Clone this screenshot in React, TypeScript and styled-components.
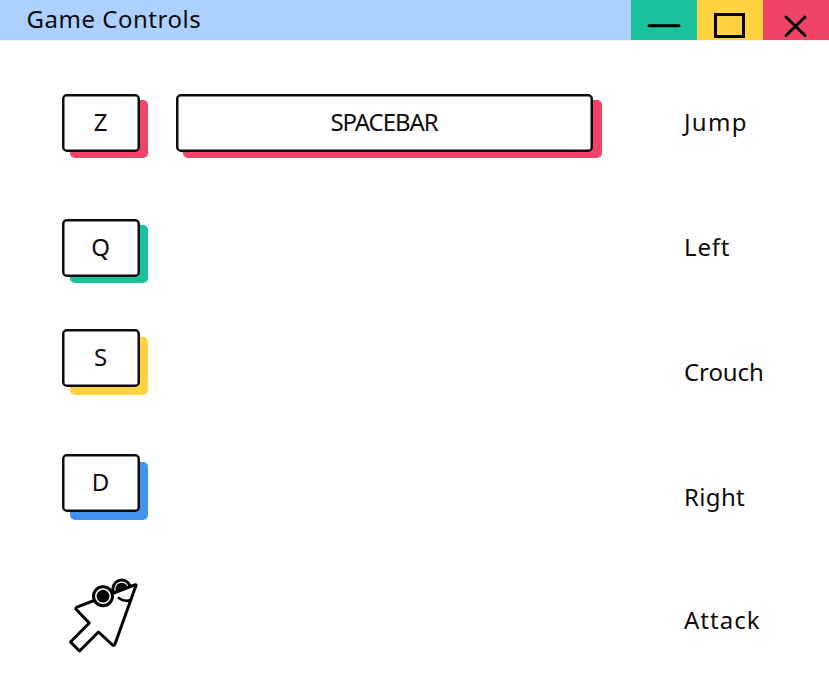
import React from "react";
import styled, { createGlobalStyle } from "styled-components";

const GlobalStyle = createGlobalStyle`
  * { box-sizing: border-box; }
  body { margin: 0; background: #fff; color: #0f0b0d; font-family: "Noto Sans", sans-serif; }
`;

const Window = styled.main`
  width: 829px;
  height: 696px;
  overflow: hidden;
  background: #fff;
`;

const TitleBar = styled.header`
  display: flex;
  height: 40px;
  background: #acd1ff;
  box-shadow: 0 1px 0 #eef5ff;
`;

const Title = styled.h1<{ $spacing: number }>`
  flex: 1;
  margin: 0;
  padding-left: 26.5px;
  font-size: 24px;
  font-weight: 400;
  line-height: 37px;
  white-space: nowrap;
  letter-spacing: ${(p) => p.$spacing}px;
`;

const WindowButton = styled.button<{ $color: string }>`
  width: 66px;
  height: 40px;
  padding: 0;
  border: 0;
  background: ${(p) => p.$color};

  svg { display: block; }
`;

const Content = styled.section`
  display: grid;
  grid-template-columns: 622px 1fr;
  padding: 54px 0 0 62px;
`;

const Keys = styled.div`
  display: flex;
  flex-direction: column;
`;

const KeyRow = styled.div<{ $height: number }>`
  display: flex;
  gap: 36px;
  height: ${(p) => p.$height}px;
`;

const Key = styled.div<{ $color: string; $drop?: number; $wide?: boolean }>`
  position: relative;
  z-index: 0;
  width: ${(p) => (p.$wide ? 417 : 78)}px;
  height: 58px;

  &::before {
    content: "";
    position: absolute;
    z-index: -1;
    top: ${(p) => p.$drop ?? 6}px;
    left: ${(p) => (p.$wide ? 7 : 8)}px;
    width: ${(p) => (p.$wide ? 419 : 78)}px;
    height: 58px;
    border-radius: 5px;
    background: ${(p) => p.$color};
  }
`;

const KeyCap = styled.div<{ $spacing?: number }>`
  display: flex;
  align-items: center;
  justify-content: center;
  height: 58px;
  padding: 0 1px 2px 0;
  border: 2px solid #0f0b0d;
  box-shadow: inset 0 0 0 0.5px #0f0b0d;
  border-radius: 5px;
  background: #fff;
  font-size: 24px;
  line-height: 32px;
  letter-spacing: ${(p) => p.$spacing ?? 0}px;
`;

const Actions = styled.div`
  display: flex;
  flex-direction: column;
`;

const Action = styled.div<{ $spacing: number; $height: number }>`
  height: ${(p) => p.$height}px;
  font-size: 24px;
  line-height: 56px;
  letter-spacing: ${(p) => p.$spacing}px;
`;

const Pointer = styled.svg`
  display: block;
  margin: -9px 0 0 -2px;
`;

const red = "#f04468";
const green = "#19c29b";
const yellow = "#ffd340";
const blue = "#4292f0";

const actions = [
  { name: "Jump", spacing: 1.3, height: 125 },
  { name: "Left", spacing: 0.8, height: 125 },
  { name: "Crouch", spacing: -0.1, height: 125 },
  { name: "Right", spacing: 0.35, height: 123 },
  { name: "Attack", spacing: 1, height: 58 },
];

const stroke = { fill: "none", stroke: "#000", strokeWidth: 3 };

export default function App() {
  return (
    <Window>
      <GlobalStyle />
      <TitleBar>
        <Title $spacing={0.52}>Game Controls</Title>
        <WindowButton $color={green} aria-label="Minimize">
          <svg width="66" height="40" {...stroke}>
            <path d="M18 25.8H48" strokeLinecap="round" />
          </svg>
        </WindowButton>
        <WindowButton $color={yellow} aria-label="Maximize">
          <svg width="66" height="40" {...stroke}>
            <path d="M18.5 14.5H46.5V36.5H18.5Z" />
          </svg>
        </WindowButton>
        <WindowButton $color={red} aria-label="Close">
          <svg width="66" height="40" {...stroke}>
            <path d="M23 17L42 35.5M42 17L23 35.5" strokeLinecap="round" />
          </svg>
        </WindowButton>
      </TitleBar>
      <Content>
        <Keys>
          <KeyRow $height={125}>
            <Key $color={red}><KeyCap>Z</KeyCap></Key>
            <Key $color={red} $wide><KeyCap $spacing={-1.1}>SPACEBAR</KeyCap></Key>
          </KeyRow>
          <KeyRow $height={110}>
            <Key $color={green}><KeyCap>Q</KeyCap></Key>
          </KeyRow>
          <KeyRow $height={125}>
            <Key $color={yellow} $drop={8}><KeyCap>S</KeyCap></Key>
          </KeyRow>
          <KeyRow $height={125}>
            <Key $color={blue} $drop={8}><KeyCap>D</KeyCap></Key>
          </KeyRow>
          <KeyRow $height={80}>
            <Pointer width="90" height="90" viewBox="0 0 90 90" {...stroke} strokeLinejoin="round">
              <circle cx="61.7" cy="19" r="8.9" fill="#fff" />
              <circle cx="61.7" cy="19" r="6.2" fill="#000" stroke="none" />
              <path fill="#fff" d="M76 15.5L55 74Q54 76.5 52 74.5L38.5 62L19.5 81L10.5 72L29.3 53L16.5 39.8Q15 38 17.5 36.8L74.5 15Q76.5 14.5 76 15.5Z" />
              <circle cx="43" cy="26.2" r="9.5" fill="#fff" />
              <circle cx="43" cy="26.2" r="6.4" fill="#000" stroke="none" />
              <path d="M58.8 28Q64.5 32.4 70.8 30" strokeWidth="2.7" strokeLinecap="round" />
            </Pointer>
          </KeyRow>
        </Keys>
        <Actions>
          {actions.map((a) => (
            <Action key={a.name} $spacing={a.spacing} $height={a.height}>{a.name}</Action>
          ))}
        </Actions>
      </Content>
    </Window>
  );
}
